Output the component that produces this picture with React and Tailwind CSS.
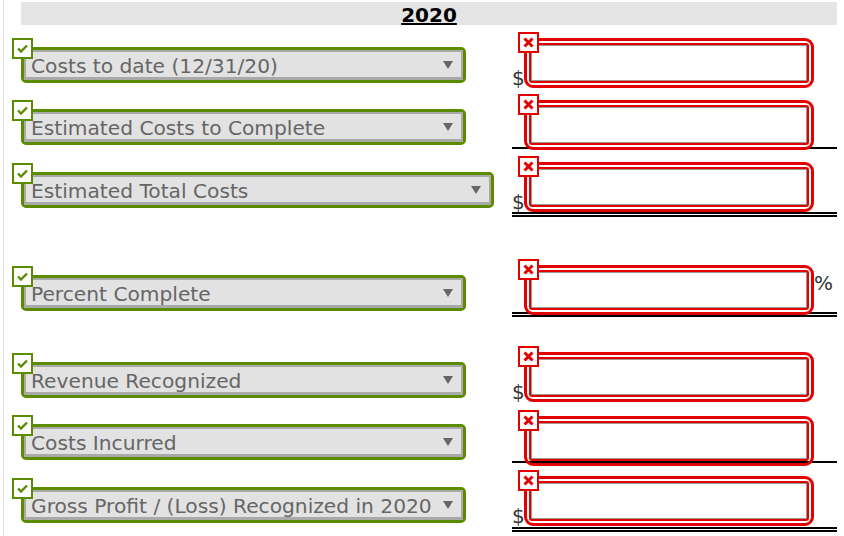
import React from "react";

const rows = [
  {
    label: "Costs to date (12/31/20)",
    prefix: "$",
    row: "h-[62px]",
    left: "pb-[4px]",
    right: "pb-[6px]",
  },
  {
    label: "Estimated Costs to Complete",
    prefix: "",
    row: "h-[62px]",
    left: "pb-[4px]",
    right: "pb-[4px] border-b-2 border-black",
  },
  {
    label: "Estimated Total Costs",
    prefix: "$",
    wide: true,
    row: "h-[68px]",
    left: "pb-[9px]",
    right: "pb-[7px] border-b-[5px] border-double border-black",
  },
  {
    label: "Percent Complete",
    prefix: "",
    suffix: "%",
    row: "h-[100px]",
    left: "pb-[6px]",
    right: "pb-[4px] border-b-[5px] border-double border-black",
  },
  {
    label: "Revenue Recognized",
    prefix: "$",
    row: "h-[86px]",
    left: "pb-[5px]",
    right: "pb-[8px]",
  },
  {
    label: "Costs Incurred",
    prefix: "",
    row: "h-[60px]",
    left: "pb-[3px]",
    right: "pb-[2px] border-b-2 border-black",
  },
  {
    label: "Gross Profit / (Loss) Recognized in 2020",
    prefix: "$",
    row: "h-[69px]",
    left: "pb-[9px]",
    right: "pb-[8px] border-b-[5px] border-double border-black",
  },
];

function Check() {
  return (
    <div className="absolute -left-[12px] -top-[12px] flex h-[21px] w-[21px] items-center justify-center border-2 border-[#5b8c00] bg-white">
      <svg width="11" height="9" viewBox="0 0 11 9">
        <polyline points="1,4.5 4,7.5 10,1.5" fill="none" stroke="#5b8c00" strokeWidth="2.4" />
      </svg>
    </div>
  );
}

function Cross() {
  return (
    <div className="absolute -left-[13px] -top-[13px] z-10 flex h-[21px] w-[21px] items-center justify-center border-2 border-[#e50000] bg-white">
      <svg width="11" height="11" viewBox="0 0 11 11">
        <path d="M1.5 1.5 L9.5 9.5 M9.5 1.5 L1.5 9.5" stroke="#e50000" strokeWidth="3" />
      </svg>
    </div>
  );
}

function Select({ label, wide }) {
  return (
    <div
      className={`relative h-[36px] shrink-0 rounded-[5px] border-[3px] border-[#5b8c00] ${
        wide ? "w-[473px]" : "w-[445px]"
      }`}
    >
      <div className="flex h-full items-center justify-between border-2 border-b-[3px] border-[#a9a9a9] bg-[#e2e2e2] pl-[5px] pr-[8px] pt-[2px]">
        <span className="whitespace-nowrap text-[20.2px] leading-[24px] text-[#666]">{label}</span>
        <svg width="10" height="8" viewBox="0 0 10 8" className="-mt-[2px] shrink-0">
          <polygon points="0,0 10,0 5,8" fill="#666" />
        </svg>
      </div>
      <Check />
    </div>
  );
}

function Field() {
  return (
    <div className="relative h-[36px] w-[276px] shrink-0">
      <input className="h-full w-full border border-[#999] bg-white outline-none" />
      <div className="pointer-events-none absolute -inset-[7px] z-10 rounded-[9px] border-[3px] border-[#e50000] p-[2px]">
        <div className="h-full w-full rounded-[3px] border-2 border-[#e50000]" />
      </div>
      <Cross />
    </div>
  );
}

export default function App() {
  return (
    <div className="min-h-[536px] bg-white pl-[3px] font-['DejaVu_Sans',Verdana,sans-serif]">
      <div className="min-h-[536px] border-l border-[#dde2ea] pl-[17px] pr-[7px] pt-[2px]">
        <div className="h-[23px] bg-[#e5e5e5] text-center text-[20px] font-bold leading-[26px] text-black">
          <span className="underline">2020</span>
        </div>

        {rows.map((r) => (
          <div key={r.label} className={`grid grid-cols-[491px_325px] ${r.row}`}>
            <div className={`flex items-end ${r.left}`}>
              <Select label={r.label} wide={r.wide} />
            </div>
            <div className={`flex items-end ${r.right}`}>
              <span className="-mb-[7px] w-[19px] shrink-0 text-[20px] leading-[20px] text-[#333]">
                {r.prefix}
              </span>
              <Field />
              {r.suffix && (
                <span className="mb-[15px] ml-[7px] text-[20px] leading-[20px] text-[#333]">
                  {r.suffix}
                </span>
              )}
            </div>
          </div>
        ))}
      </div>
    </div>
  );
}
